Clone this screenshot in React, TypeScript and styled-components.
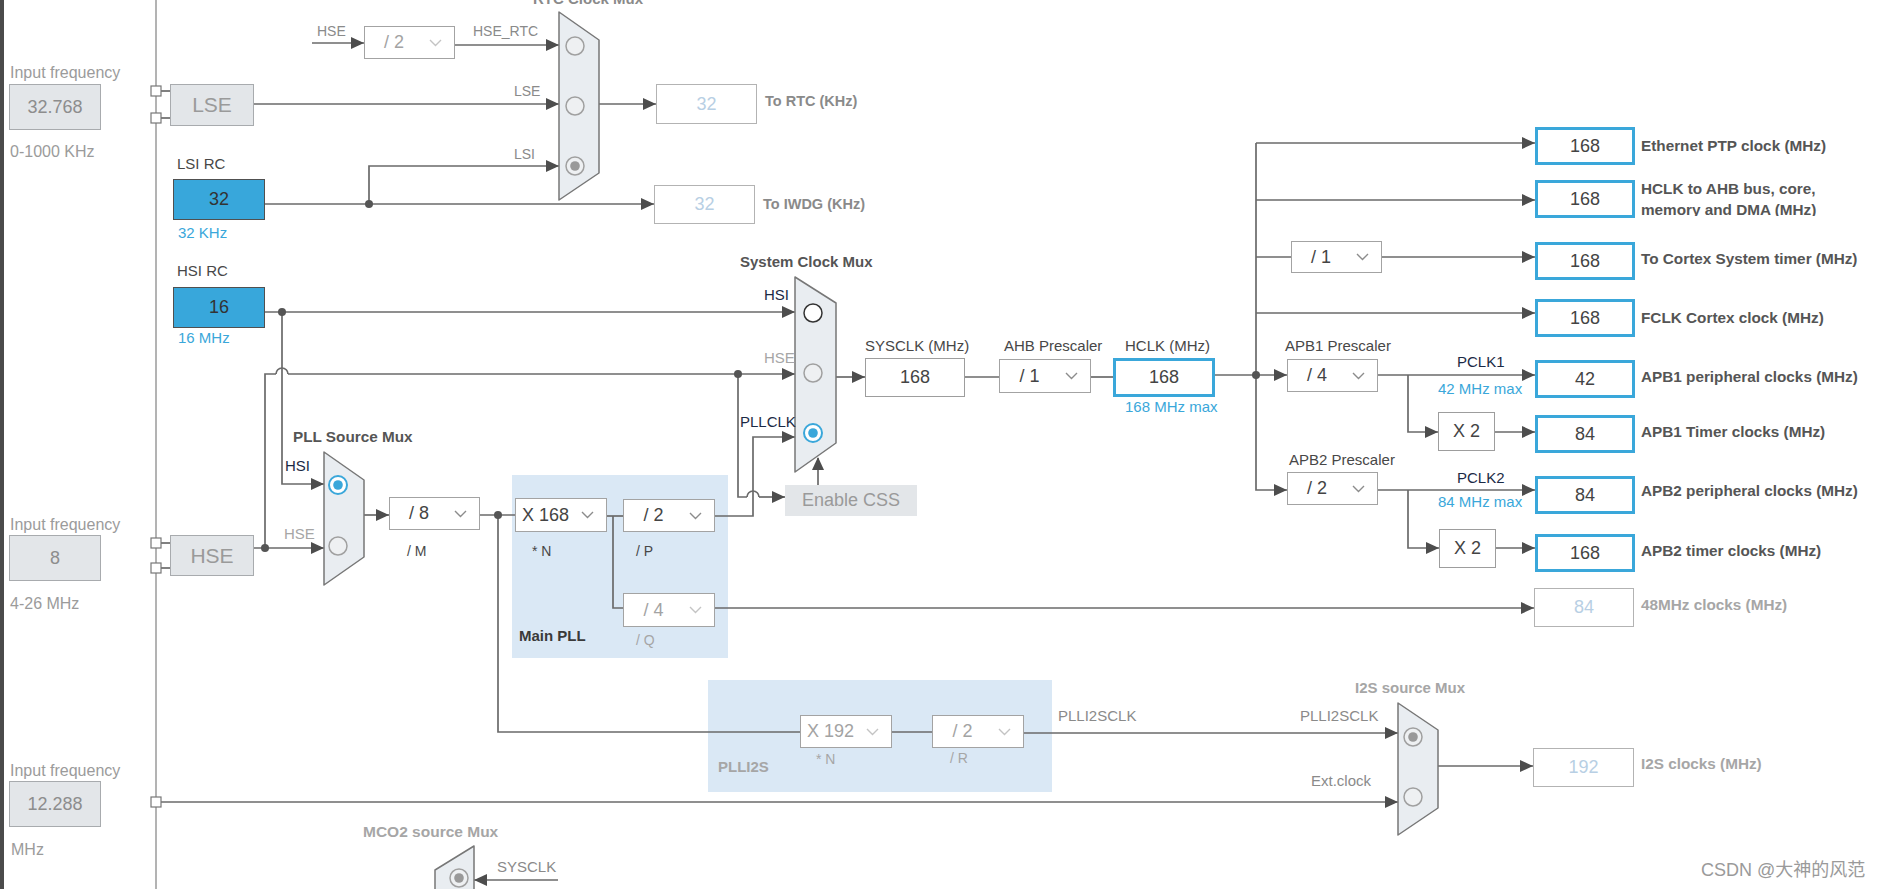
import React from 'react'
import styled, { createGlobalStyle, css } from 'styled-components'

// canvas starts after the 4px window rail
const OX = 4

const GlobalStyle = createGlobalStyle`
  html, body { margin: 0; padding: 0; background: #fff; overflow: hidden; }
  body { font-family: "Liberation Sans", Arial, sans-serif; }
`

type Pos = { $x: number; $y: number }
type Box = Pos & { $w: number; $h: number }

const at = css<Pos>`
  position: absolute;
  left: ${p => p.$x - OX}px;
  top: ${p => p.$y}px;
`
const sized = css<Box>`
  ${at}
  width: ${p => p.$w}px;
  height: ${p => p.$h}px;
  box-sizing: border-box;
`

const Page = styled.div`
  display: flex;
  width: 1887px;
  height: 889px;
  overflow: hidden;
`
const Rail = styled.div`
  flex: 0 0 4px;
  background: #4b4b4b;
`
const Canvas = styled.div`
  position: relative;
  flex: 1;
  height: 100%;
  overflow: hidden;
`
const Wires = styled.svg`
  position: absolute;
  left: 0;
  top: 0;
  width: 1883px;
  height: 889px;
`

type Tone = 'muted' | 'gray' | 'dark' | 'title' | 'blue' | 'navy' | 'faint' | 'deep'
const tones: Record<Tone, string> = {
  muted: '#9b9b9b',
  gray: '#8a8a8a',
  dark: '#474747',
  title: '#555',
  blue: '#3aa7da',
  navy: '#1b2a45',
  faint: '#a6a6a6',
  deep: '#3a3a3a',
}

const Label = styled.span<Pos & { $tone?: Tone; $bold?: boolean; $size?: number }>`
  ${at}
  top: ${p => p.$y - 10}px;
  line-height: 20px;
  font-size: ${p => p.$size ?? 15}px;
  font-weight: ${p => (p.$bold ? 700 : 400)};
  color: ${p => tones[p.$tone ?? 'dark']};
  white-space: nowrap;
`

const TwoLine = styled.div<Pos>`
  ${at}
  width: 240px;
  height: 38px;
  overflow: hidden;
  line-height: 21px;
  font-size: 15.3px;
  font-weight: 700;
  color: #555;
  white-space: nowrap;
`

const Region = styled.div<Box>`
  ${sized}
  background: #dae8f5;
`

const InputBox = styled.div<Box>`
  ${sized}
  display: flex;
  align-items: center;
  justify-content: center;
  background: #e3e6e9;
  border: 1.5px solid #a8abae;
  color: #8d8d8d;
  font-size: 18px;
`
const OscBox = styled(InputBox)`
  font-size: 21px;
  color: #9a9a9a;
`
const RcBox = styled.div<Box>`
  ${sized}
  display: flex;
  align-items: center;
  justify-content: center;
  background: #38a7db;
  border: 1.5px solid #505050;
  color: #333;
  font-size: 18px;
`

type Look = 'plain' | 'output' | 'off'
const ValueBox = styled.div<Box & { $look?: Look }>`
  ${sized}
  display: flex;
  align-items: center;
  justify-content: center;
  background: #fff;
  font-size: 18px;
  border: ${p => (p.$look === 'output' ? '3px solid #3aa7da' : `1.5px solid ${p.$look === 'off' ? '#b3b3b3' : '#9d9d9d'}`)};
  color: ${p => (p.$look === 'off' ? '#b8cfe4' : '#444')};
`

const SelectBox = styled.div<Box & { $off?: boolean }>`
  ${sized}
  display: flex;
  align-items: center;
  background: #fff;
  border: 1.5px solid #a3a3a3;
  color: ${p => (p.$off ? '#a3a3a3' : '#444')};
  font-size: 18px;
`
const SelectText = styled.span`
  flex: 1;
  text-align: center;
  white-space: nowrap;
`
const Chevron = styled.svg`
  width: 13px;
  height: 8px;
  margin: 0 12px 0 6px;
  flex: 0 0 auto;
`

const CssButton = styled.div<Box>`
  ${sized}
  display: flex;
  align-items: center;
  justify-content: center;
  background: #e3e6e9;
  color: #9a9a9a;
  font-size: 18px;
`

const Watermark = styled.span<Pos>`
  ${at}
  top: ${p => p.$y - 12}px;
  line-height: 24px;
  font-family: "Liberation Sans", "Noto Sans CJK SC", sans-serif;
  font-size: 18px;
  color: #9a9a9a;
  white-space: nowrap;
`

const Select = ({ x, y, w, h, text, off }: { x: number; y: number; w: number; h: number; text: string; off?: boolean }) => (
  <SelectBox $x={x} $y={y} $w={w} $h={h} $off={off}>
    <SelectText>{text}</SelectText>
    <Chevron viewBox="0 0 13 8">
      <polyline points="1,1 6.5,6.5 12,1" fill="none" stroke={off ? '#c4c4c4' : '#8c8c8c'} strokeWidth="1.4" />
    </Chevron>
  </SelectBox>
)

type Pt = [number, number]
const WIRE = '#6a6a6a'
const HEAD = '#4d4d4d'

const wires: Pt[][] = [
  // RTC area
  [[312, 43], [364, 43]],
  [[455, 45], [559, 45]],
  [[254, 104], [559, 104]],
  [[265, 204], [654, 204]],
  [[369, 204], [369, 166], [559, 166]],
  [[599, 104], [656, 104]],
  [[161, 91], [170, 91]],
  [[161, 118], [170, 118]],
  [[161, 543], [170, 543]],
  [[161, 568], [170, 568]],
  // HSI / HSE
  [[265, 312], [795, 312]],
  [[282, 312], [282, 484], [324, 484]],
  [[265, 548], [265, 374], [276, 374]],
  [[288, 374], [795, 374]],
  [[254, 548], [324, 548]],
  [[738, 374], [738, 497], [747, 497]],
  [[759, 497], [785, 497]],
  // PLL
  [[364, 515], [389, 515]],
  [[480, 515], [515, 515]],
  [[498, 515], [498, 732], [800, 732]],
  [[892, 732], [932, 732]],
  [[1024, 733], [1398, 733]],
  [[607, 516], [623, 516]],
  [[613, 516], [613, 608], [623, 608]],
  [[715, 516], [753, 516], [753, 437], [795, 437]],
  [[715, 608], [1534, 608]],
  [[818, 485], [818, 458]],
  // system / buses
  [[836, 377], [865, 377]],
  [[965, 377], [999, 377]],
  [[1091, 377], [1113, 377]],
  [[1215, 375], [1287, 375]],
  [[1256, 143], [1256, 490], [1287, 490]],
  [[1256, 143], [1535, 143]],
  [[1256, 200], [1535, 200]],
  [[1256, 257], [1291, 257]],
  [[1382, 257], [1535, 257]],
  [[1256, 313], [1535, 313]],
  [[1378, 375], [1535, 375]],
  [[1408, 375], [1408, 432], [1438, 432]],
  [[1495, 432], [1535, 432]],
  [[1378, 490], [1535, 490]],
  [[1408, 490], [1408, 548], [1439, 548]],
  [[1496, 548], [1535, 548]],
  // I2S / MCO2
  [[161, 802], [1398, 802]],
  [[1438, 766], [1533, 766]],
  [[558, 880], [474, 880]],
]

type Dir = 'r' | 'l' | 'u'
const arrows: [number, number, Dir][] = [
  [364, 43, 'r'], [559, 45, 'r'], [559, 104, 'r'], [654, 204, 'r'], [559, 166, 'r'], [656, 104, 'r'],
  [795, 312, 'r'], [324, 484, 'r'], [795, 374, 'r'], [324, 548, 'r'], [785, 497, 'r'],
  [389, 515, 'r'], [1398, 733, 'r'], [795, 437, 'r'], [1534, 608, 'r'], [818, 457, 'u'],
  [865, 377, 'r'], [1287, 375, 'r'], [1287, 490, 'r'],
  [1535, 143, 'r'], [1535, 200, 'r'], [1535, 257, 'r'], [1535, 313, 'r'], [1535, 375, 'r'],
  [1438, 432, 'r'], [1535, 432, 'r'], [1535, 490, 'r'], [1439, 548, 'r'], [1535, 548, 'r'],
  [1398, 802, 'r'], [1533, 766, 'r'], [474, 880, 'l'],
]

const dots: Pt[] = [[369, 204], [282, 312], [265, 548], [738, 374], [498, 515], [1256, 375]]
const hops: Pt[] = [[282, 374], [753, 497]]
const ports: Pt[] = [[156, 91], [156, 118], [156, 543], [156, 568], [156, 802]]

const head = (x: number, y: number, d: Dir) => {
  if (d === 'r') return `${x},${y} ${x - 13},${y - 6} ${x - 13},${y + 6}`
  if (d === 'l') return `${x},${y} ${x + 13},${y - 6} ${x + 13},${y + 6}`
  return `${x},${y} ${x - 6},${y + 13} ${x + 6},${y + 13}`
}

type RadioKind = 'sel' | 'on' | 'dim' | 'dimSel'
const Radio = ({ x, y, kind }: { x: number; y: number; kind: RadioKind }) => (
  <g>
    <circle
      cx={x}
      cy={y}
      r={9}
      fill={kind === 'sel' || kind === 'on' ? '#fff' : '#eef0f2'}
      stroke={kind === 'sel' ? '#3aa7da' : kind === 'on' ? '#333' : '#a0a0a0'}
      strokeWidth={kind === 'sel' ? 2 : 1.5}
    />
    {(kind === 'sel' || kind === 'dimSel') && <circle cx={x} cy={y} r={4.8} fill={kind === 'sel' ? '#3aa7da' : '#999'} />}
  </g>
)

const Mux = ({ points }: { points: string }) => (
  <polygon points={points} fill="#e9edf1" stroke="#777" strokeWidth="1.5" strokeLinejoin="round" />
)

const labels: { x: number; y: number; t: string; tone?: Tone; bold?: boolean; size?: number }[] = [
  { x: 10, y: 73, t: 'Input frequency', tone: 'muted', size: 16 },
  { x: 10, y: 152, t: '0-1000 KHz', tone: 'muted', size: 16 },
  { x: 10, y: 525, t: 'Input frequency', tone: 'muted', size: 16 },
  { x: 10, y: 604, t: '4-26 MHz', tone: 'muted', size: 16 },
  { x: 10, y: 771, t: 'Input frequency', tone: 'muted', size: 16 },
  { x: 11, y: 850, t: 'MHz', tone: 'muted', size: 16 },
  { x: 533, y: -1, t: 'RTC Clock Mux', tone: 'gray', bold: true },
  { x: 317, y: 31, t: 'HSE', tone: 'gray', size: 14 },
  { x: 473, y: 31, t: 'HSE_RTC', tone: 'gray', size: 14 },
  { x: 514, y: 91, t: 'LSE', tone: 'gray', size: 14 },
  { x: 514, y: 154, t: 'LSI', tone: 'gray', size: 14 },
  { x: 765, y: 101, t: 'To RTC (KHz)', tone: 'gray', bold: true, size: 14.5 },
  { x: 763, y: 204, t: 'To IWDG (KHz)', tone: 'gray', bold: true, size: 14.5 },
  { x: 177, y: 164, t: 'LSI RC' },
  { x: 178, y: 233, t: '32 KHz', tone: 'blue' },
  { x: 177, y: 271, t: 'HSI RC' },
  { x: 178, y: 338, t: '16 MHz', tone: 'blue' },
  { x: 740, y: 262, t: 'System Clock Mux', tone: 'title', bold: true },
  { x: 764, y: 295, t: 'HSI', tone: 'navy' },
  { x: 764, y: 358, t: 'HSE', tone: 'faint' },
  { x: 740, y: 422, t: 'PLLCLK', tone: 'navy' },
  { x: 293, y: 437, t: 'PLL Source Mux', tone: 'title', bold: true, size: 15.3 },
  { x: 285, y: 466, t: 'HSI', tone: 'navy' },
  { x: 284, y: 534, t: 'HSE', tone: 'faint' },
  { x: 407, y: 551, t: '/ M', size: 14 },
  { x: 532, y: 551, t: '* N', size: 14 },
  { x: 636, y: 551, t: '/ P', size: 14 },
  { x: 519, y: 636, t: 'Main PLL', tone: 'deep', bold: true },
  { x: 636, y: 640, t: '/ Q', tone: 'faint', size: 14 },
  { x: 865, y: 346, t: 'SYSCLK (MHz)' },
  { x: 1004, y: 346, t: 'AHB Prescaler' },
  { x: 1125, y: 346, t: 'HCLK (MHz)' },
  { x: 1125, y: 407, t: '168 MHz max', tone: 'blue' },
  { x: 1285, y: 346, t: 'APB1 Prescaler' },
  { x: 1457, y: 362, t: 'PCLK1', tone: 'navy' },
  { x: 1438, y: 389, t: '42 MHz max', tone: 'blue' },
  { x: 1289, y: 460, t: 'APB2 Prescaler' },
  { x: 1457, y: 478, t: 'PCLK2', tone: 'navy' },
  { x: 1438, y: 502, t: '84 MHz max', tone: 'blue' },
  { x: 1641, y: 146, t: 'Ethernet PTP clock (MHz)', tone: 'title', bold: true, size: 15.3 },
  { x: 1641, y: 259, t: 'To Cortex System timer (MHz)', tone: 'title', bold: true, size: 15.3 },
  { x: 1641, y: 318, t: 'FCLK Cortex clock (MHz)', tone: 'title', bold: true, size: 15.3 },
  { x: 1641, y: 377, t: 'APB1 peripheral clocks (MHz)', tone: 'title', bold: true, size: 15.3 },
  { x: 1641, y: 432, t: 'APB1 Timer clocks (MHz)', tone: 'title', bold: true, size: 15.3 },
  { x: 1641, y: 491, t: 'APB2 peripheral clocks (MHz)', tone: 'title', bold: true, size: 15.3 },
  { x: 1641, y: 551, t: 'APB2 timer clocks (MHz)', tone: 'title', bold: true, size: 15.3 },
  { x: 1641, y: 605, t: '48MHz clocks (MHz)', tone: 'faint', bold: true, size: 15.3 },
  { x: 1641, y: 764, t: 'I2S clocks (MHz)', tone: 'faint', bold: true, size: 15.3 },
  { x: 718, y: 767, t: 'PLLI2S', tone: 'faint', bold: true },
  { x: 816, y: 759, t: '* N', tone: 'faint', size: 14 },
  { x: 950, y: 758, t: '/ R', tone: 'faint', size: 14 },
  { x: 1058, y: 716, t: 'PLLI2SCLK', tone: 'gray' },
  { x: 1355, y: 688, t: 'I2S source Mux', tone: 'faint', bold: true },
  { x: 1300, y: 716, t: 'PLLI2SCLK', tone: 'gray' },
  { x: 1311, y: 781, t: 'Ext.clock', tone: 'gray' },
  { x: 363, y: 832, t: 'MCO2 source Mux', tone: 'faint', bold: true, size: 15.5 },
  { x: 497, y: 867, t: 'SYSCLK', tone: 'gray' },
]

const outputs: { y: number; v: string }[] = [
  { y: 127, v: '168' },
  { y: 180, v: '168' },
  { y: 242, v: '168' },
  { y: 299, v: '168' },
  { y: 360, v: '42' },
  { y: 415, v: '84' },
  { y: 476, v: '84' },
  { y: 534, v: '168' },
]

const selects: { x: number; y: number; w: number; h: number; t: string; off?: boolean }[] = [
  { x: 364, y: 26, w: 91, h: 33, t: '/ 2', off: true },
  { x: 389, y: 497, w: 91, h: 33, t: '/ 8' },
  { x: 515, y: 498, w: 92, h: 34, t: 'X 168' },
  { x: 623, y: 499, w: 92, h: 33, t: '/ 2' },
  { x: 623, y: 593, w: 92, h: 34, t: '/ 4', off: true },
  { x: 999, y: 359, w: 92, h: 34, t: '/ 1' },
  { x: 1291, y: 241, w: 91, h: 32, t: '/ 1' },
  { x: 1287, y: 359, w: 91, h: 33, t: '/ 4' },
  { x: 1287, y: 472, w: 91, h: 33, t: '/ 2' },
  { x: 800, y: 715, w: 92, h: 33, t: 'X 192', off: true },
  { x: 932, y: 715, w: 92, h: 33, t: '/ 2', off: true },
]

const ClockTree = () => (
  <Canvas>
    <Region $x={512} $y={475} $w={216} $h={183} />
    <Region $x={708} $y={680} $w={344} $h={112} />

    <Wires viewBox={`${OX} 0 1883 889`}>
      <line x1={156} y1={0} x2={156} y2={889} stroke="#9a9a9a" strokeWidth="1.5" />
      {wires.map((w, i) => (
        <polyline key={i} points={w.map(p => p.join(',')).join(' ')} fill="none" stroke={WIRE} strokeWidth="1.7" />
      ))}
      {hops.map(([x, y], i) => (
        <path key={i} d={`M ${x - 6} ${y} A 6 6 0 0 1 ${x + 6} ${y}`} fill="none" stroke={WIRE} strokeWidth="1.7" />
      ))}
      {arrows.map(([x, y, d], i) => (
        <polygon key={i} points={head(x, y, d)} fill={HEAD} />
      ))}
      {dots.map(([x, y], i) => (
        <circle key={i} cx={x} cy={y} r={4} fill="#555" />
      ))}
      {ports.map(([x, y], i) => (
        <rect key={i} x={x - 5} y={y - 5} width={10} height={10} fill="#fff" stroke="#777" strokeWidth="1.2" />
      ))}

      <Mux points="559,12 599,40 599,173 559,200" />
      <Radio x={575} y={46} kind="dim" />
      <Radio x={575} y={106} kind="dim" />
      <Radio x={575} y={166} kind="dimSel" />

      <Mux points="795,277 836,303 836,443 795,472" />
      <Radio x={813} y={313} kind="on" />
      <Radio x={813} y={373} kind="dim" />
      <Radio x={813} y={433} kind="sel" />

      <Mux points="324,452 364,480 364,557 324,585" />
      <Radio x={338} y={485} kind="sel" />
      <Radio x={338} y={546} kind="dim" />

      <Mux points="1398,703 1438,730 1438,808 1398,835" />
      <Radio x={1413} y={737} kind="dimSel" />
      <Radio x={1413} y={797} kind="dim" />

      <Mux points="474,846 474,900 435,900 435,870" />
      <Radio x={459} y={878} kind="dimSel" />
    </Wires>

    <InputBox $x={9} $y={84} $w={92} $h={46}>32.768</InputBox>
    <InputBox $x={9} $y={535} $w={92} $h={46}>8</InputBox>
    <InputBox $x={9} $y={781} $w={92} $h={46}>12.288</InputBox>

    <OscBox $x={170} $y={84} $w={84} $h={42}>LSE</OscBox>
    <OscBox $x={170} $y={535} $w={84} $h={41}>HSE</OscBox>
    <RcBox $x={173} $y={179} $w={92} $h={41}>32</RcBox>
    <RcBox $x={173} $y={287} $w={92} $h={41}>16</RcBox>

    <ValueBox $x={656} $y={84} $w={101} $h={40} $look="off">32</ValueBox>
    <ValueBox $x={654} $y={185} $w={101} $h={39} $look="off">32</ValueBox>
    <ValueBox $x={865} $y={358} $w={100} $h={39}>168</ValueBox>
    <ValueBox $x={1113} $y={358} $w={102} $h={39} $look="output">168</ValueBox>
    <ValueBox $x={1438} $y={412} $w={57} $h={39}>X 2</ValueBox>
    <ValueBox $x={1439} $y={529} $w={57} $h={39}>X 2</ValueBox>
    {outputs.map(o => (
      <ValueBox key={o.y} $x={1535} $y={o.y} $w={100} $h={38} $look="output">{o.v}</ValueBox>
    ))}
    <ValueBox $x={1534} $y={588} $w={100} $h={39} $look="off">84</ValueBox>
    <ValueBox $x={1533} $y={748} $w={101} $h={39} $look="off">192</ValueBox>

    {selects.map((s, i) => (
      <Select key={i} x={s.x} y={s.y} w={s.w} h={s.h} text={s.t} off={s.off} />
    ))}

    <CssButton $x={785} $y={485} $w={132} $h={31}>Enable CSS</CssButton>

    {labels.map((l, i) => (
      <Label key={i} $x={l.x} $y={l.y} $tone={l.tone} $bold={l.bold} $size={l.size}>{l.t}</Label>
    ))}
    <TwoLine $x={1641} $y={178}>
      HCLK to AHB bus, core,
      <br />
      memory and DMA (MHz)
    </TwoLine>

    <Watermark $x={1701} $y={870}>CSDN @大神的风范</Watermark>
  </Canvas>
)

export default function App() {
  return (
    <Page>
      <GlobalStyle />
      <Rail />
      <ClockTree />
    </Page>
  )
}
